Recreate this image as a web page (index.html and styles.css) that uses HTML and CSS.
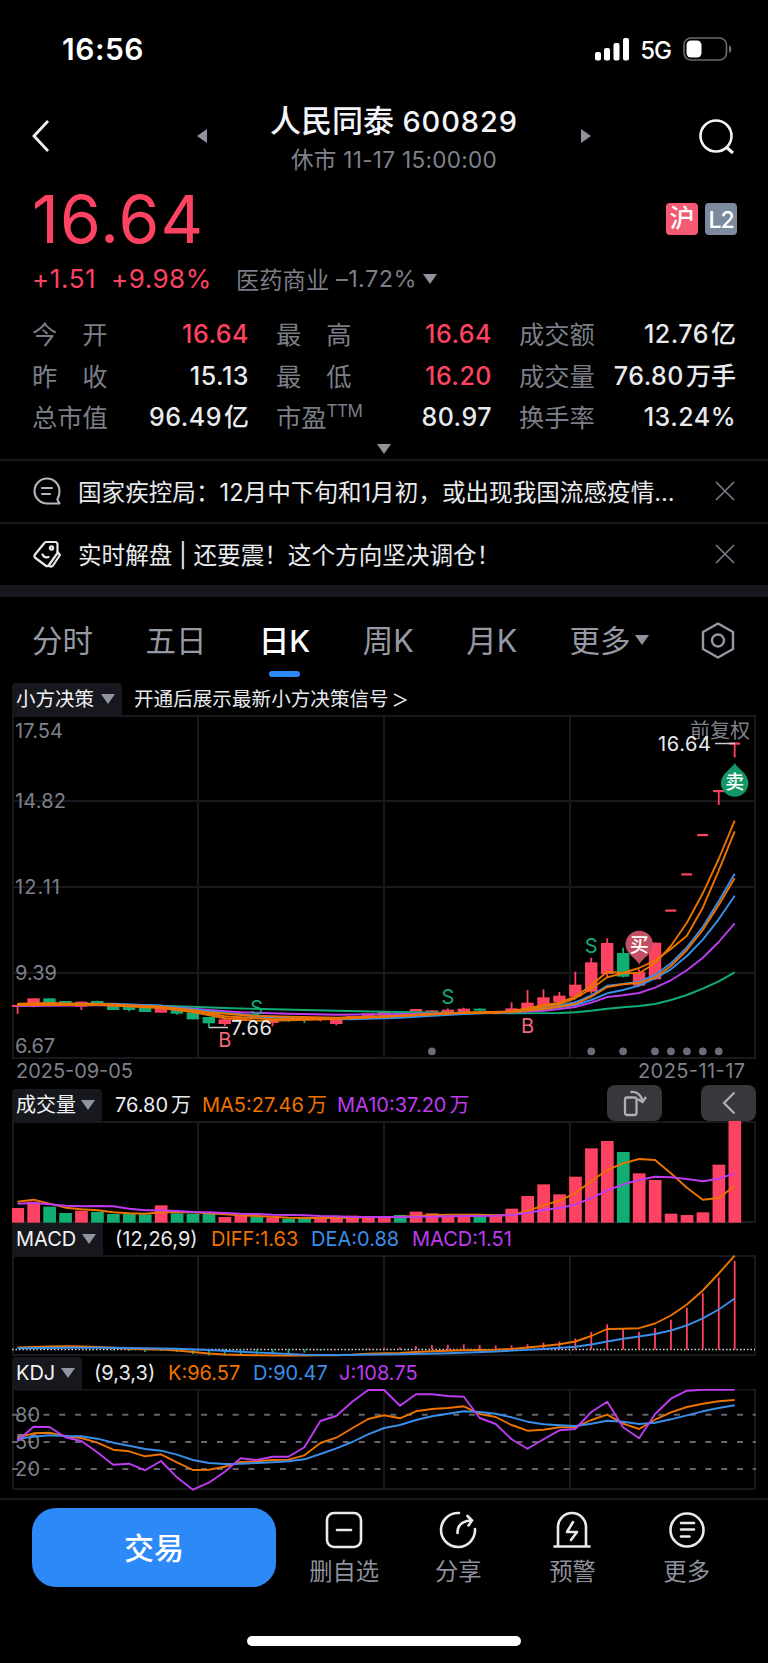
FILE: index.html
```html
<!DOCTYPE html>
<html lang="zh-CN">
<head>
    <meta charset="UTF-8">
    <meta name="viewport" content="width=device-width, initial-scale=1.0">
    <title>人民同泰 600829</title>
    <link rel="stylesheet" href="styles.css">
</head>
<body>
    <div class="status-bar">
        <span class="clock">16:56</span>
        <div class="status-icons">
            <svg width="34" height="23" viewBox="0 0 34 23" fill="#fff">
                <rect x="0" y="14" width="6" height="8.500" rx="2"/>
                <rect x="9" y="10" width="6" height="12.500" rx="2"/>
                <rect x="18.500" y="5" width="6" height="17.500" rx="2"/>
                <rect x="28" y="0" width="6" height="22.500" rx="2"/>
            </svg>
            <span class="network">5G</span>
            <svg width="49" height="24" viewBox="0 0 49 24">
                <rect x="1" y="1" width="42.500" height="22" rx="7" fill="none" stroke="#6b6b6b" stroke-width="1.600"/>
                <rect x="3.500" y="3.500" width="15" height="17" rx="4.500" fill="#fff"/>
                <path d="M46 8q2.500 1 2.500 4t-2.500 4z" fill="#6b6b6b"/>
            </svg>
        </div>
    </div>

    <header class="header">
        <svg class="back" width="20" height="34" viewBox="0 0 20 34"><path d="M17 2 3 17 17 32" fill="none" stroke="#f2f3f7" stroke-width="2.800"/></svg>
        <svg class="prev" width="10" height="14" viewBox="0 0 10 14"><path d="M10 0v14L0 7z" fill="#8f939e"/></svg>
        <div class="title">
            <h1>人民同泰 <span>600829</span></h1>
            <p>休市 11-17 15:00:00</p>
        </div>
        <svg class="next" width="10" height="14" viewBox="0 0 10 14"><path d="M0 0v14l10-7z" fill="#8f939e"/></svg>
        <svg class="search" width="36" height="36" viewBox="0 0 36 36" fill="none" stroke="#f2f3f7" stroke-width="2.600"><circle cx="17" cy="17" r="15.500"/><path d="m27 28 7 6" stroke-width="3"/></svg>
    </header>

    <section class="quote">
        <div class="price-row">
            <strong>16.64</strong>
            <div class="badges">
                <span class="badge sh">沪</span>
                <span class="badge l2">L2</span>
            </div>
        </div>
        <div class="change-row">
            <span class="up change">+1.51</span>
            <span class="up percent">+9.98%</span>
            <span class="sector">医药商业</span>
            <span class="sector-change">–1.72%</span>
            <svg width="14" height="10" viewBox="0 0 14 10"><path d="M0 0h14L7 10z" fill="#8f939e"/></svg>
        </div>
        <div class="stats">
            <div><label class="two">今<i></i>开</label><b class="up">16.64</b></div>
            <div><label class="two">最<i></i>高</label><b class="up">16.64</b></div>
            <div><label>成交额</label><b>12.76<em>亿</em></b></div>
            <div><label class="two">昨<i></i>收</label><b>15.13</b></div>
            <div><label class="two">最<i></i>低</label><b class="up">16.20</b></div>
            <div><label>成交量</label><b>76.80<em>万手</em></b></div>
            <div><label>总市值</label><b>96.49<em>亿</em></b></div>
            <div><label>市盈<sup>TTM</sup></label><b>80.97</b></div>
            <div><label>换手率</label><b>13.24%</b></div>
        </div>
        <svg class="expand" width="14" height="10" viewBox="0 0 14 10"><path d="M0 0h14L7 10z" fill="#8f939e"/></svg>
    </section>

    <section class="news">
        <div class="news-row">
            <svg width="28" height="28" viewBox="0 0 28 28" fill="none" stroke="#b4b7bf" stroke-width="2.100" stroke-linecap="round" stroke-linejoin="round">
                <path d="M26.500 14A12.500 12.500 0 1 0 14 26.500H26.500L24.300 22.500Q26.500 19 26.500 14z"/>
                <path d="M9 11h10M9 17h8"/>
            </svg>
            <span>国家疾控局：12月中下旬和1月初，或出现我国流感疫情...</span>
            <svg class="close" width="20" height="20" viewBox="0 0 20 20"><path d="m1 1 18 18M19 1 1 19" stroke="#777b86" stroke-width="1.700"/></svg>
        </div>
        <div class="news-row">
            <svg width="28" height="28" viewBox="0 0 28 28" fill="none" stroke="#e8e9ee" stroke-width="2.200" stroke-linecap="round" stroke-linejoin="round">
                <path d="M13 2h9q2.500 0 2.500 2.500V13L16 25q-1.500 2-3.500.500L2.500 18q-2-1.500-.500-3.500L11 3.500Q12 2 13 2z"/>
                <path d="M24.500 12 27 15l-7 10.500q-1.500 1.800-4 .500"/>
                <circle cx="18.500" cy="8" r="1.600"/>
                <path d="M9.500 14.500q2 4 6 2.500"/>
            </svg>
            <span>实时解盘 | 还要震！这个方向坚决调仓！</span>
            <svg class="close" width="20" height="20" viewBox="0 0 20 20"><path d="m1 1 18 18M19 1 1 19" stroke="#777b86" stroke-width="1.700"/></svg>
        </div>
    </section>

    <nav class="tabs">
        <span>分时</span>
        <span>五日</span>
        <span class="active">日K</span>
        <span>周K</span>
        <span>月K</span>
        <span class="more">更多<svg width="14" height="10" viewBox="0 0 14 10"><path d="M0 0h14L7 10z" fill="#8f939e"/></svg></span>
        <svg width="34" height="37" viewBox="0 0 34 37" fill="none" stroke="#9699a3" stroke-width="2.400" stroke-linejoin="round"><path d="M17 1.500 32 10v17L17 35.500 2 27V10z"/><circle cx="17" cy="18.500" r="6"/></svg>
    </nav>

    <main class="charts">
        <div class="chart-head signal">
            <span class="pill">小方决策<svg width="14" height="10" viewBox="0 0 14 10"><path d="M0 0h14L7 10z" fill="#9194a0"/></svg></span>
            <span class="tip">开通后展示最新小方决策信号<svg width="14" height="16" viewBox="0 0 14 16"><path d="m1 2 12 6-12 6" fill="none" stroke="#e6e7eb" stroke-width="1.500"/></svg></span>
        </div>
        <svg id="price" width="768" height="370" viewBox="0 715 768 370"></svg>

        <div class="chart-head volume">
            <span class="pill">成交量<svg width="14" height="10" viewBox="0 0 14 10"><path d="M0 0h14L7 10z" fill="#9194a0"/></svg></span>
            <span class="v1">76.80<em>万</em></span>
            <span class="v2 orange">MA5:27.46<em>万</em></span>
            <span class="v3 purple">MA10:37.20<em>万</em></span>
            <button class="rotate"><svg width="26" height="28" viewBox="0 0 26 28" fill="none" stroke="#aeafb4" stroke-width="2.300"><rect x="3" y="8.500" width="11.500" height="17.500" rx="2"/><path d="M8.500 3q10-1 12 9.500M15.500 10l5 3 3.500-5"/></svg></button>
            <button><svg width="14" height="24" viewBox="0 0 14 24"><path d="M12.500 1.500 2 12l10.500 10.500" fill="none" stroke="#aeafb4" stroke-width="2.200"/></svg></button>
        </div>
        <svg id="volume" width="768" height="102" viewBox="0 1121 768 102"></svg>

        <div class="chart-head macd">
            <span class="pill">MACD<svg width="14" height="10" viewBox="0 0 14 10"><path d="M0 0h14L7 10z" fill="#9194a0"/></svg></span>
            <span class="v1">(12,26,9)</span>
            <span class="v2 orange">DIFF:1.63</span>
            <span class="v3 blue">DEA:0.88</span>
            <span class="v4 purple">MACD:1.51</span>
        </div>
        <svg id="macd" width="768" height="102" viewBox="0 1255 768 102"></svg>

        <div class="chart-head kdj">
            <span class="pill">KDJ<svg width="14" height="10" viewBox="0 0 14 10"><path d="M0 0h14L7 10z" fill="#9194a0"/></svg></span>
            <span class="v1">(9,3,3)</span>
            <span class="v2 orange">K:96.57</span>
            <span class="v3 blue">D:90.47</span>
            <span class="v4 purple">J:108.75</span>
        </div>
        <svg id="kdj" width="768" height="102" viewBox="0 1389 768 102"></svg>
    </main>

    <footer class="footer">
        <button class="trade">交易</button>
        <div class="action">
            <svg width="38" height="38" viewBox="0 0 38 38" fill="none" stroke="#e9eaf0" stroke-width="2.600" stroke-linecap="round"><rect x="2" y="2" width="34" height="34" rx="7"/><path d="M12 19h14"/></svg>
            <span>删自选</span>
        </div>
        <div class="action">
            <svg width="38" height="38" viewBox="0 0 38 38" fill="none" stroke="#e9eaf0" stroke-width="2.600" stroke-linecap="round"><path d="M20 2A17 17 0 1 0 36 18"/><path d="M18.500 22q0-12 14-12.500M28.500 5l4.500 4.500-3.500 5"/></svg>
            <span>分享</span>
        </div>
        <div class="action">
            <svg width="38" height="38" viewBox="0 0 38 38" fill="none" stroke="#e9eaf0" stroke-width="2.600" stroke-linecap="round" stroke-linejoin="round"><path d="M1.500 35.500h35M5 35V16a14 14 0 0 1 28 0v19"/><path d="m20 11-6 10h10l-6 8"/></svg>
            <span>预警</span>
        </div>
        <div class="action">
            <svg width="38" height="38" viewBox="0 0 38 38" fill="none" stroke="#e9eaf0" stroke-width="2.600" stroke-linecap="round"><circle cx="19" cy="19" r="16.500"/><path d="M13 12h13M13 18.500h13M13 25.500h8.500"/></svg>
            <span>更多</span>
        </div>
    </footer>
    <div class="home-bar"></div>

    <script src="script.js"></script>
</body>
</html>
```

FILE: styles.css
```css
* {
    box-sizing: border-box;
}

body {
    margin: 0;
    width: 768px;
    height: 1663px;
    overflow: hidden;
    background: #000;
    color: #e9eaee;
    font-family: Inter, "Noto Sans CJK SC", sans-serif;
    display: flex;
    flex-direction: column;
}

svg {
    display: block;
    flex: none;
}

b, i, em, strong {
    font-style: normal;
}

button {
    border: 0;
    padding: 0;
    font-family: inherit;
}

.up { color: #fe4261; }
.orange { color: #ec7300; }
.blue { color: #3a8ee8; }
.purple { color: #bd3cf0; }

.status-bar {
    height: 98px;
    padding: 0 36px 0 62px;
    display: flex;
    align-items: center;
    justify-content: space-between;
}

.clock {
    font-size: 30px;
    font-weight: 600;
    color: #fff;
    letter-spacing: 0.5px;
}

.status-icons {
    display: flex;
    align-items: center;
}

.network {
    margin: 3px 12px 0 11px;
    font-size: 24px;
    font-weight: 500;
    letter-spacing: -1px;
    color: #fff;
}

.header {
    height: 84px;
    padding: 0 33px 0 31px;
    display: flex;
    align-items: center;
}

.back { margin-top: -8px; }
.prev { margin: -8px 0 0 146px; }
.next { margin-top: -8px; }
.search { margin: -7px 0 0 auto; }

.title {
    width: 374px;
    text-align: center;
}

.title h1 {
    margin: 5px 0 0;
    font-size: 31px;
    line-height: 36px;
    font-weight: 500;
    color: #f4f5f8;
    white-space: nowrap;
}

.title h1 span {
    font-size: 29px;
    letter-spacing: 0.9px;
}

.title p {
    margin: 2px 0 5px;
    font-size: 22.5px;
    line-height: 36px;
    letter-spacing: 0.3px;
    color: #7f828c;
}

.quote {
    height: 277px;
    padding: 0 32px;
}

.price-row {
    height: 75px;
    display: flex;
    align-items: center;
    justify-content: space-between;
}

.price-row strong {
    font-size: 66px;
    line-height: 75px;
    font-weight: 400;
    color: #fe4261;
    letter-spacing: 1.2px;
}

.badges {
    margin: -2px -1px 0 0;
    display: flex;
    gap: 7px;
}

.badge {
    width: 32px;
    height: 32px;
    border-radius: 4px;
    font-size: 25px;
    line-height: 31px;
    font-weight: 500;
    color: #fff;
    text-align: center;
}

.sh { background: #f45b73; }

.l2 {
    background: #7b8a9d;
    font-size: 23px;
    line-height: 34px;
    letter-spacing: -1px;
}

.change-row {
    height: 43px;
    display: flex;
    align-items: center;
    font-size: 26px;
    color: #7b7e87;
    white-space: nowrap;
}

.change { width: 79px; letter-spacing: 0.6px; }
.percent { width: 125px; letter-spacing: 0.5px; }
.sector { width: 100px; font-size: 23.3px; }
.sector-change { width: 87px; font-size: 23.5px; letter-spacing: 0.4px; }

.stats {
    display: grid;
    grid-template-columns: 217px 216px 217px;
    column-gap: 27px;
    grid-auto-rows: 41.5px;
    padding-top: 14px;
    height: 139px;
}

.stats div {
    display: flex;
    justify-content: space-between;
    align-items: center;
    white-space: nowrap;
}

.stats label {
    font-size: 25.3px;
    color: #7b7e87;
    line-height: 41px;
}

.stats i {
    display: inline-block;
    width: 25px;
}

.stats sup {
    font-size: 17px;
    line-height: 0;
    vertical-align: 10px;
    letter-spacing: -0.5px;
}

.stats b {
    font-size: 25px;
    line-height: 41px;
    font-weight: 500;
    letter-spacing: 0.5px;
}

.stats em {
    margin-left: 2px;
    letter-spacing: 0;
}

.expand {
    margin: 5px auto 0;
}

.news-row {
    height: 63px;
    border-top: 2px solid #16171b;
    padding: 0 33px 2px 33px;
    display: flex;
    align-items: center;
    font-size: 23.6px;
}

.news-row span {
    margin-left: 17px;
    white-space: nowrap;
}

.close {
    margin-left: auto;
}

.news {
    border-bottom: 12px solid #17181d;
}

.tabs {
    height: 86px;
    padding: 0 33px 0 32px;
    display: flex;
    align-items: center;
    justify-content: space-between;
    font-size: 30.5px;
    color: #9699a3;
}

.tabs span {
    line-height: 85px;
}

.tabs .active {
    position: relative;
    color: #fff;
    font-weight: 500;
}

.tabs .active::after {
    content: "";
    position: absolute;
    left: 50%;
    bottom: 6px;
    width: 31px;
    height: 6px;
    margin-left: -16px;
    border-radius: 3px;
    background: #2d88f8;
}

.more {
    display: flex;
    align-items: center;
    gap: 4px;
}

.chart-head {
    height: 32px;
    padding-left: 12px;
    display: flex;
    align-items: flex-end;
    font-size: 20px;
    line-height: 31px;
    white-space: nowrap;
}

.pill {
    height: 32px;
    padding: 0 7px 0 4px;
    display: flex;
    align-items: center;
    justify-content: space-between;
    border-radius: 4px 4px 0 0;
    background: #17181d;
    color: #f2f3f6;
}

.signal .pill { width: 110px; margin-right: 12px; font-size: 19.5px; }
.tip { display: flex; align-items: center; gap: 4px; font-size: 19.6px; }

.volume { height: 36px; padding-right: 12px; }
.volume .pill { width: 90px; margin-right: 13px; }
.volume .v1 { width: 87px; }
.volume .v2 { width: 135px; }
.volume em { margin-left: 3px; }

.macd .pill { width: 91px; margin-right: 12px; }
.macd .v1 { width: 96px; }
.macd .v2 { width: 100px; }
.macd .v3 { width: 101px; }

.kdj .pill { width: 70px; margin-right: 12px; }
.kdj .v1 { width: 74px; }
.kdj .v2 { width: 85px; }
.kdj .v3 { width: 86px; }

.chart-head button {
    width: 55px;
    height: 36px;
    border-radius: 8px;
    background: #37383c;
    display: flex;
    align-items: center;
    justify-content: center;
}

.chart-head .rotate {
    margin: 0 39px 0 auto;
}

.footer {
    margin-top: 7px;
    height: 105px;
    padding: 8px 0 0 32px;
    border-top: 2px solid #17181c;
    display: flex;
}

.trade {
    width: 244px;
    height: 79px;
    padding-bottom: 4px;
    margin-right: 11px;
    border-radius: 24px;
    background: #2d88f8;
    color: #fff;
    font-size: 30px;
    font-weight: 500;
}

.action {
    width: 114.2px;
    padding-top: 3px;
    display: flex;
    flex-direction: column;
    align-items: center;
    font-size: 23.3px;
    line-height: 46px;
    color: #8e919b;
}

.home-bar {
    width: 274px;
    height: 10px;
    margin: 33px auto 0;
    border-radius: 5px;
    background: #fff;
}

.axis {
    font-size: 20px;
    fill: #7e818a;
}

.peak {
    font-size: 20px;
    fill: #e9eaee;
}

.mark {
    font-size: 20px;
    text-anchor: middle;
}

.flag {
    font-size: 19px;
    font-weight: 500;
    text-anchor: middle;
    fill: #fff;
}
```

FILE: script.js
```javascript
const RED = '#fe4261', GREEN = '#12ad72', ORANGE = '#ec7300', BLUE = '#3a8ee8', PURPLE = '#bd3cf0';
const STEP = 15.935;
const x = i => 17.6 + i * STEP;

function rect(x, y, w, h, fill) {
    return `<rect x="${x}" y="${y}" width="${w}" height="${h}" fill="${fill}"/>`;
}

function text(x, y, label, cls, fill, len) {
    return `<text x="${x}" y="${y}" class="${cls}" ${fill ? `fill="${fill}"` : ''} ${len ? `textLength="${len}"` : ''}>${label}</text>`;
}

// points are [index, y] pairs, y is in thirds of a pixel from the origin
function line(points, color, origin) {
    const d = points.map(p => `${x(p[0]).toFixed(1)},${(origin + p[1] / 3).toFixed(1)}`).join(' ');
    return `<polyline points="${d}" fill="none" stroke="${color}" stroke-width="1.9" stroke-linejoin="round"/>`;
}

function grid(top, bottom, rows) {
    let out = `<g stroke="#18191e" stroke-width="2"><rect x="13" y="${top}" width="742" height="${bottom - top}" fill="none"/>`;
    [198, 384, 570].forEach(v => out += `<path d="M${v} ${top}V${bottom}"/>`);
    rows.forEach(r => out += `<path d="M13 ${r}H755"/>`);
    return out + '</g>';
}

// ---- price: [body top, body bottom, high, low, colour]
const candles = [
    [915, 921, 915, 942, 1], [895, 920, 895, 922, 1], [895, 908, 895, 908, 0], [903, 914, 903, 914, 0],
    [905, 920, 905, 930, 1], [903, 912, 902, 912, 0], [914, 930, 914, 930, 0], [920, 930, 920, 934, 0],
    [922, 936, 922, 936, 0], [916, 938, 914, 938, 1], [928, 941, 928, 944, 0], [937, 958, 937, 958, 0],
    [951, 970, 951, 983, 0], [958, 972, 958, 978, 1], [955, 963, 955, 963, 1], [960, 965, 960, 965, 0],
    [960, 969, 960, 979, 1], [957, 963, 957, 965, 0], [954, 960, 954, 969, 0], [952, 960, 952, 964, 1],
    [958, 972, 958, 976, 1], [948, 955, 948, 955, 1], [940, 950, 940, 950, 1], [936, 946, 936, 946, 1],
    [934, 943, 934, 943, 0], [927, 937, 927, 940, 1], [931, 938, 931, 940, 1], [929, 938, 925, 940, 1],
    [926, 936, 923, 938, 1], [926, 932, 925, 935, 0], [933, 940, 933, 943, 1], [925, 936, 907, 938, 1],
    [908, 930, 870, 932, 1], [892, 918, 868, 922, 1], [887, 906, 876, 912, 1], [854, 890, 815, 896, 1],
    [787, 875, 773, 881, 1], [729, 822, 715, 831, 1], [759, 830, 743, 832, 0], [816, 857, 808, 860, 1],
    [728, 838, 728, 840, 1]
];
let out = grid(716, 1058, [801, 887, 973]);
out += text(15, 738, '17.54', 'axis', '', 48) + text(15, 808, '14.82', 'axis', '', 51) +
    text(15, 894, '12.11', 'axis', '', 45) + text(15, 980, '9.39', 'axis', '', 42) + text(15, 1053, '6.67', 'axis', '', 40);
out += text(690, 738, '前复权', 'axis');
candles.forEach((c, i) => {
    const color = c[4] ? RED : GREEN;
    const left = i ? x(i) - 6.2 : 12;
    out += rect(left, 700 + c[0] / 3, x(i) + 6.2 - left - (i ? 0 : 5), (c[1] - c[0]) / 3, color);
    out += rect(x(i) - 0.9, 700 + c[2] / 3, 1.8, (c[3] - c[2]) / 3, color);
});
// limit-up days
[[41, 910.5], [42, 874.3], [43, 835], [44, 791], [45, 743.5]].forEach(([i, y]) => out += rect(x(i) - 5.7, y - 1, 11, 2.2, RED));
out += rect(x(44) - 0.9, 791, 1.8, 14, RED) + rect(x(45) - 0.9, 743.5, 1.8, 14, RED);

out += line([[0, 915], [5, 914], [10, 919], [13, 924], [16, 928], [20, 932], [23, 935], [27, 938], [31, 940], [34, 939], [35, 937], [36, 932], [37, 926], [38, 922], [39, 918], [40, 912], [41, 900], [42, 885], [43, 866], [44, 844], [45, 817]], GREEN, 700);
out += line([[0, 918], [5, 916], [9, 918], [12, 930], [14, 937], [17, 941], [20, 944], [23, 943], [28, 940], [31, 937], [33, 932], [34, 927], [35, 921], [36, 908], [37, 891], [38, 886], [39, 879], [40, 863], [41, 841], [42, 811], [43, 773], [44, 726], [45, 670]], PURPLE, 700);
out += line([[0, 916], [3, 911], [6, 911], [9, 917], [12, 933], [15, 947], [18, 956], [21, 958], [24, 953], [28, 942], [31, 937], [33, 927], [34, 921], [35, 915], [36, 900], [37, 880], [38, 870], [39, 857], [40, 835], [41, 808], [42, 768], [43, 719], [44, 658], [45, 587]], BLUE, 700);
out += line([[0, 914], [5, 912], [9, 917], [12, 935], [15, 950], [19, 957], [23, 950], [28, 940], [31, 936], [33, 924], [34, 917], [35, 907], [36, 886], [37, 857], [38, 852], [39, 845], [40, 825], [41, 790], [42, 742], [43, 681], [44, 604], [45, 521]], BLUE, 700);
out += line([[0, 915], [5, 914], [9, 921], [12, 937], [15, 948], [20, 953], [24, 947], [28, 938], [31, 936], [33, 927], [34, 920], [35, 912], [36, 890], [37, 861], [38, 853], [39, 848], [40, 833], [41, 798], [42, 750], [43, 690], [44, 615], [45, 535]], ORANGE, 700);
out += line([[0, 912], [5, 911], [9, 920], [11, 931], [13, 949], [16, 958], [20, 955], [24, 948], [28, 938], [31, 934], [33, 920], [34, 912], [35, 895], [36, 866], [37, 832], [38, 819], [39, 804], [40, 782], [41, 747], [42, 707], [43, 623], [44, 512], [45, 394]], ORANGE, 700);
out += line([[0, 911], [2, 909], [5, 914], [9, 924], [11, 936], [13, 955], [15, 962], [17, 961], [20, 957], [23, 950], [27, 939], [30, 938], [31, 934], [33, 916], [34, 908], [35, 890], [36, 856], [37, 815], [38, 819], [39, 820], [40, 790], [41, 738], [42, 668], [43, 580], [44, 477], [45, 362]], ORANGE, 700);

[26, 36, 38, 40, 41, 42, 43, 44].forEach(i => out += `<circle cx="${x(i)}" cy="1051.3" r="3.9" fill="#6a6c77"/>`);
[[15, 1015], [27, 1004], [36, 953]].forEach(([i, y]) => out += text(x(i), y, 'S', 'mark', GREEN));
[[13, 1047], [32, 1033]].forEach(([i, y]) => out += text(x(i), y, 'B', 'mark', '#f5677b'));
out += '<path d="M209 1027.500h19M715 743.500h20" stroke="#c9cad0" stroke-width="1.500"/>';
out += text(231, 1035, '7.66', 'peak', '', 41) + text(658, 751, '16.64', 'peak', '', 53);
// buy / sell flags
out += '<path d="M639.200 964.500C636 958 625.500 954 625.500 944.500a13.700 13.700 0 1 1 27.400 0C652.900 954 642.500 958 639.200 964.500z" fill="#c34f63"/>' + text(639.2, 952, '买', 'flag');
out += '<path d="M734.700 763C731.500 769 721 773.500 721 783a13.700 13.700 0 1 0 27.400 0C748.400 773.500 738 769 734.700 763z" fill="#149767"/>' + text(734.7, 789, '卖', 'flag');
out += text(16, 1078, '2025-09-05', 'axis', '', 117) + text(638, 1078, '2025-11-17', 'axis', '', 107);
document.getElementById('price').innerHTML = out;

// ---- volume
const volume = [384, 365, 380, 399, 392, 396, 402, 402, 403, 376, 400, 401, 400, 411, 405, 410, 412, 416, 417, 415, 414, 407, 413, 410, 405, 395, 400, 410, 409, 411, 408, 386, 348, 313, 343, 290, 205, 183, 216, 280, 300, 401, 405, 397, 254, 120];
const falling = [2, 3, 5, 6, 7, 8, 10, 11, 12, 15, 17, 18, 24, 29, 38];
const pairs = list => list.map((y, i) => [i, y]);
out = grid(1122, 1222, []);
volume.forEach((v, i) => {
    const left = i ? x(i) - 6.2 : 12;
    out += rect(left, 1080 + v / 3, x(i) + 6.5 - left, (428 - v) / 3, falling.includes(i) ? GREEN : RED);
});
out += line(pairs([365, 359, 371, 383, 388, 391, 397, 400, 401, 397, 396, 397, 400, 403, 406, 408, 410, 413, 414, 414, 414, 413, 412, 411, 410, 408, 406, 404, 404, 404, 406, 405, 393, 376, 362, 340, 303, 270, 250, 237, 240, 280, 323, 359, 354, 318]), ORANGE, 1080);
out += line(pairs([371, 369, 373, 377, 379, 378, 379, 386, 391, 391, 393, 396, 397, 399, 401, 402, 404, 405, 406, 408, 409, 411, 411, 411, 411, 410, 410, 409, 408, 408, 407, 405, 399, 390, 384, 374, 354, 332, 313, 300, 290, 292, 297, 304, 296, 280]), PURPLE, 1080);
document.getElementById('volume').innerHTML = out;

// ---- MACD
const ZERO = 1349.5;
const bars = [0, 0, 0, 0, 0, 0, -1, -1.5, -2.5, -1.5, -2.5, -4.5, -6, -6, -5.5, -5, -4.5, -4, -3.2, -1.5, 0, 0, 1, 1.8, 2, 3.5, 4.5, 4.8, 5.2, 4.5, 4, 4.2, 5.2, 6.8, 8, 11, 17.5, 25.2, 20.5, 17.5, 21.5, 29.8, 41.8, 56.2, 71.8, 88.5];
out = grid(1256, 1355, []);
out += `<path d="M12 ${ZERO}H755" stroke="#d5d6da" stroke-width="1.5" stroke-dasharray="1.5 2"/>`;
bars.forEach((b, i) => out += rect(x(i) - 0.9, b > 0 ? ZERO - b : ZERO, 1.8, Math.abs(b), b > 0 ? RED : GREEN));
out += line(pairs([52.5, 51, 49.5, 49, 49.5, 51, 53.4, 56, 58, 58.5, 61.5, 66, 70.5, 73.5, 75, 76, 76.5, 76.5, 76.5, 76, 75.6, 74, 71.5, 70, 69, 66, 64, 62.4, 61, 60, 59, 57, 52.5, 48, 43, 34.5, 18, -3, -4, -5.4, -19.5, -43.5, -76.5, -118.5, -169.5, -223]), ORANGE, 1330);
out += line([[0, 55], [3, 53.4], [6, 53], [10, 56], [12, 60], [14, 65], [16, 70], [18, 74], [20, 75], [24, 73], [27, 69.6], [30, 64.5], [33, 57], [35, 50], [36, 43.5], [37, 34.5], [38, 26], [39, 19.5], [40, 12], [41, 1.5], [42, -14], [43, -35], [44, -61.5], [45, -94.5]], BLUE, 1330);
document.getElementById('macd').innerHTML = out;

// ---- KDJ
out = grid(1389.5, 1489, []);
[1414.7, 1442, 1469].forEach(y => out += `<path d="M12 ${y}H756" stroke="#63656f" stroke-width="1.900" stroke-dasharray="6 9.760"/>`);
out += text(15, 1422, '80', 'axis', '', 25) + text(15, 1449, '50', 'axis', '', 25) + text(15, 1476, '20', 'axis', '', 25);
out += line(pairs([323, 310, 308, 319, 324, 338, 359, 364, 379, 373, 397, 420, 419, 410, 396, 394, 390, 389, 376, 339, 323, 295, 267, 256, 265, 244, 237, 234, 229, 252, 261, 285, 302, 299, 292, 292, 270, 254, 281, 297, 269, 247, 231, 221, 214, 210]), ORANGE, 1330);
out += line(pairs([326, 320, 316, 318, 319, 326, 338, 347, 357, 362, 374, 390, 399, 402, 401, 399, 397, 394, 388, 372, 355, 336, 313, 294, 285, 270, 259, 251, 244, 246, 251, 262, 275, 283, 286, 288, 281, 272, 275, 282, 278, 268, 256, 244, 234, 226]), BLUE, 1330);
out += line(pairs([332, 290, 291, 322, 333, 367, 404, 401, 421, 393, 442, 479, 458, 425, 385, 390, 380, 380, 352, 273, 258, 215, 180, 180, 227, 193, 193, 198, 200, 264, 282, 328, 356, 328, 301, 297, 246, 215, 292, 325, 253, 206, 182, 179, 179, 179]), PURPLE, 1330);
document.getElementById('kdj').innerHTML = out;
```
